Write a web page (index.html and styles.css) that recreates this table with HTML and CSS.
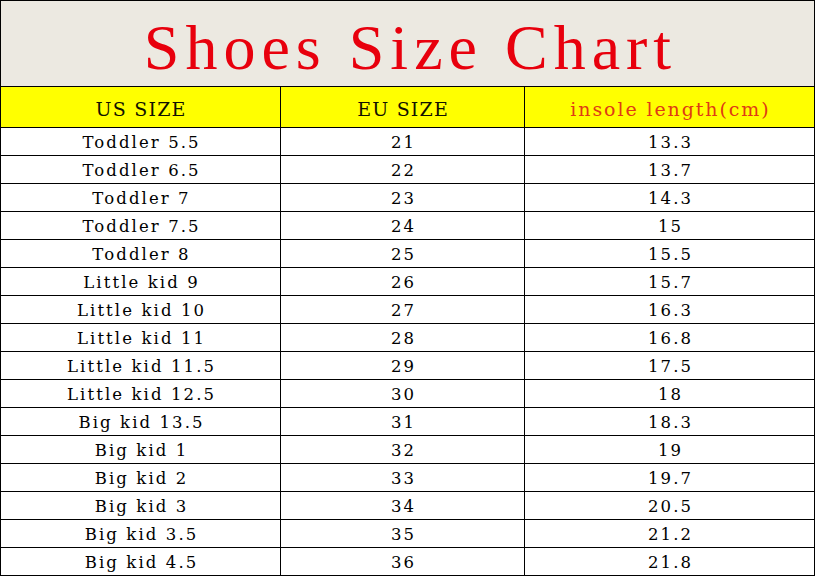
FILE: index.html
```html
<!DOCTYPE html>
<html>
<head>
<meta charset="utf-8">
<link rel="stylesheet" href="styles.css">
</head>
<body>
<div class="chart">
  <div class="title">Shoes Size Chart</div>
  <div class="head">US SIZE</div>
  <div class="head">EU SIZE</div>
  <div class="head head-red">insole length(cm)</div>

  <div class="cell">Toddler 5.5</div><div class="cell">21</div><div class="cell">13.3</div>
  <div class="cell">Toddler 6.5</div><div class="cell">22</div><div class="cell">13.7</div>
  <div class="cell">Toddler 7</div><div class="cell">23</div><div class="cell">14.3</div>
  <div class="cell">Toddler 7.5</div><div class="cell">24</div><div class="cell">15</div>
  <div class="cell">Toddler 8</div><div class="cell">25</div><div class="cell">15.5</div>
  <div class="cell">Little kid 9</div><div class="cell">26</div><div class="cell">15.7</div>
  <div class="cell">Little kid 10</div><div class="cell">27</div><div class="cell">16.3</div>
  <div class="cell">Little kid 11</div><div class="cell">28</div><div class="cell">16.8</div>
  <div class="cell">Little kid 11.5</div><div class="cell">29</div><div class="cell">17.5</div>
  <div class="cell">Little kid 12.5</div><div class="cell">30</div><div class="cell">18</div>
  <div class="cell">Big kid 13.5</div><div class="cell">31</div><div class="cell">18.3</div>
  <div class="cell">Big kid 1</div><div class="cell">32</div><div class="cell">19</div>
  <div class="cell">Big kid 2</div><div class="cell">33</div><div class="cell">19.7</div>
  <div class="cell">Big kid 3</div><div class="cell">34</div><div class="cell">20.5</div>
  <div class="cell">Big kid 3.5</div><div class="cell">35</div><div class="cell">21.2</div>
  <div class="cell">Big kid 4.5</div><div class="cell">36</div><div class="cell">21.8</div>
</div>
</body>
</html>
```

FILE: styles.css
```css
html, body {
  margin: 0;
  padding: 0;
  background: #ffffff;
}

.chart {
  display: grid;
  grid-template-columns: 279px 243px 289px;
  grid-template-rows: 85px 40px repeat(16, 27px);
  gap: 1px;
  padding: 1px;
  width: 813px;
  background: #000000;
  font-family: "DejaVu Serif", "Liberation Serif", serif;
}

.title {
  grid-column: 1 / 4;
  background: #ece9e1;
  color: #e8000d;
  font-family: "Liberation Serif", serif;
  font-size: 64px;
  letter-spacing: 6px;
  line-height: 1;
  display: flex;
  align-items: center;
  justify-content: center;
  padding: 8px 0 0 6px;
  box-sizing: border-box;
}

.head {
  background: #ffff00;
  color: #111100;
  font-size: 19px;
  letter-spacing: 1.2px;
  padding: 4px 0 0 1.2px;
  box-sizing: border-box;
  display: flex;
  align-items: center;
  justify-content: center;
}

.head-red {
  color: #e03a14;
  letter-spacing: 1.9px;
  padding-left: 1.9px;
}

.cell {
  background: #ffffff;
  color: #000000;
  font-size: 16.5px;
  letter-spacing: 2.1px;
  padding: 2px 0 0 2.1px;
  box-sizing: border-box;
  display: flex;
  align-items: center;
  justify-content: center;
}
```
